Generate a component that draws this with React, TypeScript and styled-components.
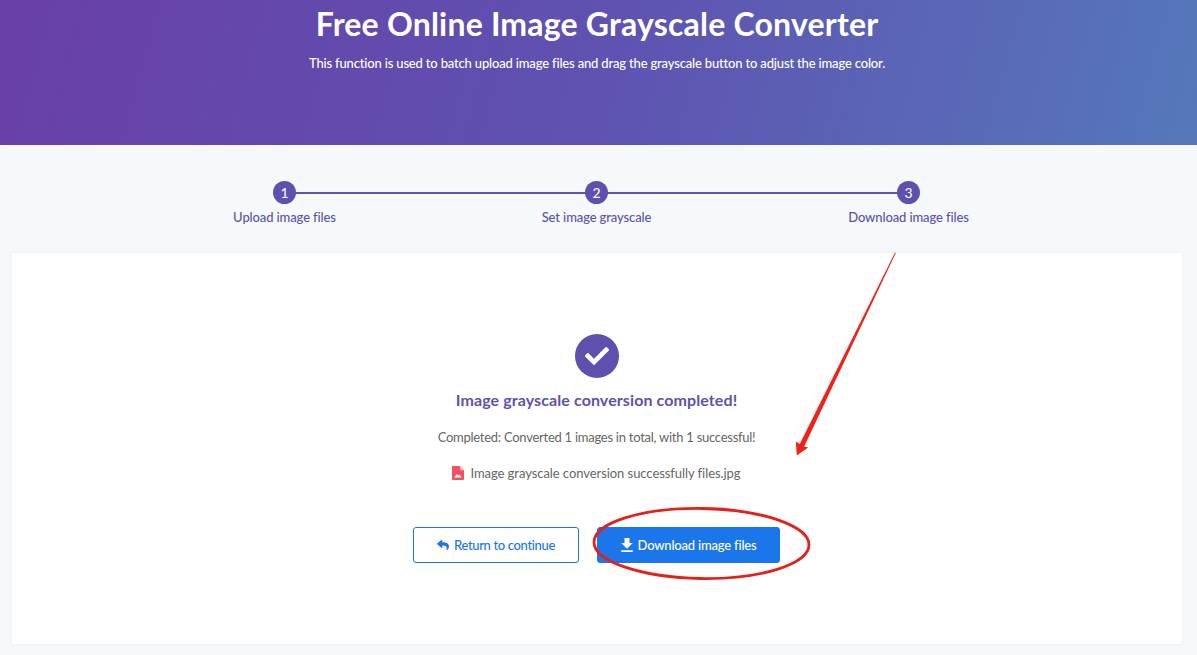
import React from 'react';
import styled, { createGlobalStyle } from 'styled-components';
import { FaCheck, FaReply } from 'react-icons/fa';

const GlobalStyle = createGlobalStyle`
  html, body {
    margin: 0;
    padding: 0;
    background: #f5f9fb;
    font-family: "Lato", "Open Sans", sans-serif;
  }
`;

const steps = ['Upload image files', 'Set image grayscale', 'Download image files'];

const ImageFileIcon = () => (
  <svg width="12" height="14" viewBox="0 0 13 15">
    <path d="M1 0h7.5L13 4.5V14a1 1 0 0 1-1 1H1a1 1 0 0 1-1-1V1a1 1 0 0 1 1-1z" fill="#f5505f" />
    <path d="M8.5 0v3.5a1 1 0 0 0 1 1H13z" fill="#fbb0b6" />
    <path d="M2.5 12.5 5.2 8.6l1.5 1.6 1.2-1 2.6 3.3z" fill="#fff" />
  </svg>
);

const TrayDownloadIcon = () => (
  <svg width="12" height="14" viewBox="5 3 14 17">
    <path d="M19 9h-4V3H9v6H5l7 7 7-7zM5 18v2h14v-2H5z" fill="currentColor" />
  </svg>
);

export default function App() {
  return (
    <Page>
      <GlobalStyle />
      <Hero>
        <Title>Free Online Image Grayscale Converter</Title>
        <Subtitle>This function is used to batch upload image files and drag the grayscale button to adjust the image color.</Subtitle>
      </Hero>
      <Main>
        <Steps>
          {steps.map((label, i) => (
            <Step key={label}>
              <StepNumber>{i + 1}</StepNumber>
              <StepLabel>{label}</StepLabel>
            </Step>
          ))}
        </Steps>
        <Card>
          <DoneBadge>
            <FaCheck />
          </DoneBadge>
          <DoneTitle>Image grayscale conversion completed!</DoneTitle>
          <Summary>Completed: Converted 1 images in total, with 1 successful!</Summary>
          <FileRow>
            <ImageFileIcon />
            <span>Image grayscale conversion successfully files.jpg</span>
          </FileRow>
          <Actions>
            <ReturnButton>
              <FaReply />
              Return to continue
            </ReturnButton>
            <DownloadButton>
              <TrayDownloadIcon />
              Download image files
            </DownloadButton>
          </Actions>
        </Card>
      </Main>
      <Annotation viewBox="0 0 1197 655">
        <polygon points="895,252.5 895.8,253 804.2,446.4 808.2,447.6 796.8,455.4 795.8,441.6 799.8,444" fill="#f0231a" />
        <ellipse cx="701.5" cy="543.5" rx="107.5" ry="35" fill="none" stroke="#e3211b" strokeWidth="2.8" transform="rotate(0.8 701.5 543.5)" />
      </Annotation>
    </Page>
  );
}

const Page = styled.div`
  position: relative;
  height: 655px;
  overflow: hidden;
  background: #f5f9fb;
`;

const Hero = styled.header`
  height: 145px;
  box-sizing: border-box;
  padding: 5px 3px 0 0;
  text-align: center;
  color: #fff;
  background: linear-gradient(105deg, #693fa8 0%, #5f52b1 50%, #5578ba 100%);
`;

const Title = styled.h1`
  margin: 0;
  font-size: 32px;
  line-height: 38px;
  font-weight: 700;
  letter-spacing: 0.2px;
`;

const Subtitle = styled.p`
  margin: 10px 0 0;
  font-size: 13px;
  line-height: 20px;
  font-weight: 500;
  letter-spacing: -0.17px;
`;

const Main = styled.main`
  padding: 36px 16px 11px 12px;
`;

const Steps = styled.ol`
  display: grid;
  grid-template-columns: repeat(3, 312px);
  justify-content: center;
  margin: 0 0 27px;
  padding: 0;
  list-style: none;
`;

const Step = styled.li`
  position: relative;
  display: flex;
  flex-direction: column;
  align-items: center;
  gap: 4px;

  &:not(:last-child)::after {
    content: '';
    position: absolute;
    left: 50%;
    top: 11px;
    width: 100%;
    height: 2px;
    background: #5f52b1;
  }
`;

const StepNumber = styled.span`
  position: relative;
  z-index: 1;
  width: 23px;
  height: 23px;
  border-radius: 50%;
  background: #5f50ae;
  color: #fff;
  font-size: 14px;
  line-height: 23px;
  text-align: center;
`;

const StepLabel = styled.span`
  font-size: 13px;
  line-height: 18px;
  font-weight: 500;
  letter-spacing: -0.12px;
  color: #5f52ab;
`;

const Card = styled.section`
  height: 391px;
  margin-right: -1px;
  box-sizing: border-box;
  padding: 81px 1px 0 0;
  display: flex;
  flex-direction: column;
  align-items: center;
  background: #fff;
  box-shadow: 0 0 3px rgba(60, 80, 110, 0.08);
`;

const DoneBadge = styled.div`
  width: 44px;
  height: 44px;
  border-radius: 50%;
  display: flex;
  align-items: center;
  justify-content: center;
  background: #5f50ae;
  color: #fff;
  font-size: 24px;
`;

const DoneTitle = styled.h2`
  margin: 11px 0 0;
  font-size: 16px;
  line-height: 22px;
  font-weight: 700;
  letter-spacing: 0.1px;
  color: #5f52ab;
`;

const Summary = styled.p`
  margin: 16px 0 0;
  font-size: 13px;
  line-height: 20px;
  letter-spacing: -0.26px;
  color: #666;
`;

const FileRow = styled.p`
  margin: 16px 0 0;
  display: flex;
  align-items: center;
  gap: 6px;
  font-size: 13px;
  line-height: 20px;
  letter-spacing: -0.06px;
  color: #666;
`;

const Actions = styled.div`
  display: flex;
  gap: 18px;
  margin-top: 44px;
`;

const ActionButton = styled.button`
  height: 36px;
  box-sizing: border-box;
  display: flex;
  align-items: center;
  justify-content: center;
  gap: 5px;
  border-radius: 3px;
  border: 1px solid #1a76ea;
  font-family: inherit;
  font-size: 13px;
  font-weight: 500;
  cursor: pointer;

  svg {
    font-size: 12px;
  }
`;

const ReturnButton = styled(ActionButton)`
  width: 166px;
  background: #fff;
  color: #1a76ea;
  letter-spacing: -0.35px;
`;

const DownloadButton = styled(ActionButton)`
  width: 183px;
  background: #1a76ea;
  color: #fff;
  letter-spacing: -0.2px;
`;

const Annotation = styled.svg`
  position: absolute;
  inset: 0;
  width: 1197px;
  height: 655px;
  pointer-events: none;
`;
